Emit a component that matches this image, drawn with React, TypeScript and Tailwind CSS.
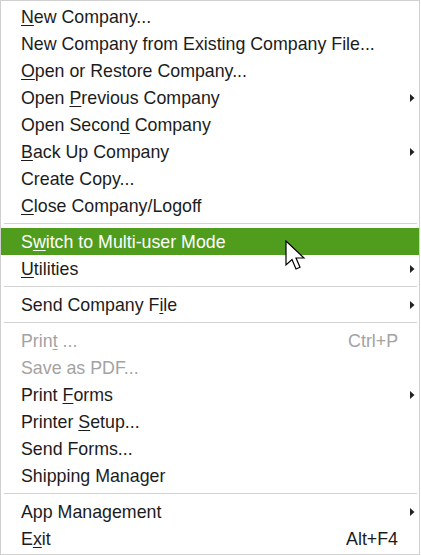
import React from "react";

type Item =
  | { sep: true }
  | {
      sep?: false;
      label: string;
      u?: number; // index of the underlined mnemonic letter
      shortcut?: string;
      sub?: boolean;
      disabled?: boolean;
      active?: boolean;
    };

const items: Item[] = [
  { label: "New Company...", u: 0 },
  { label: "New Company from Existing Company File..." },
  { label: "Open or Restore Company...", u: 0 },
  { label: "Open Previous Company", u: 5, sub: true },
  { label: "Open Second Company", u: 10 },
  { label: "Back Up Company", u: 0, sub: true },
  { label: "Create Copy..." },
  { label: "Close Company/Logoff", u: 0 },
  { sep: true },
  { label: "Switch to Multi-user Mode", u: 1, active: true },
  { label: "Utilities", u: 0, sub: true },
  { sep: true },
  { label: "Send Company File", u: 14, sub: true },
  { sep: true },
  { label: "Print ...", u: 4, shortcut: "Ctrl+P", disabled: true },
  { label: "Save as PDF...", disabled: true },
  { label: "Print Forms", u: 6, sub: true },
  { label: "Printer Setup...", u: 8 },
  { label: "Send Forms..." },
  { label: "Shipping Manager" },
  { sep: true },
  { label: "App Management", sub: true },
  { label: "Exit", u: 1, shortcut: "Alt+F4" },
];

function Label({ text, u }: { text: string; u?: number }) {
  if (u === undefined) return <span>{text}</span>;
  return (
    <span>
      {text.slice(0, u)}
      <span className="underline underline-offset-[2px]">{text[u]}</span>
      {text.slice(u + 1)}
    </span>
  );
}

export default function App() {
  return (
    <div className="w-[421px] h-[555px] bg-white">
      <div
        className="relative w-[420px] h-[555px] border border-[#d0d0d0] bg-white py-[2px] text-[17.8px] text-[#1c1c1c]"
        style={{ fontFamily: '"Liberation Sans", Arial, sans-serif' }}
      >
        {items.map((it, i) =>
          it.sep ? (
            <div key={i} className="h-[9px] flex items-center ml-[3px] mr-[2px]">
              <div className="h-px w-full bg-[#d3d3d3]" />
            </div>
          ) : (
            <div
              key={i}
              className={
                "relative h-[27px] flex items-center pt-[2px] pl-[20px] pr-[21px] " +
                (it.active ? "bg-[#509c1d] text-white " : "") +
                (it.disabled ? "text-[#a3a3a3]" : "")
              }
            >
              <Label text={it.label} u={it.u} />
              {it.shortcut && <span className="ml-auto">{it.shortcut}</span>}
              {it.sub && (
                <svg
                  className="absolute right-[4px] top-[10px]"
                  width="5"
                  height="8"
                  viewBox="0 0 5 8"
                >
                  <path d="M0 0 L4.5 4 L0 8 Z" fill="#222" />
                </svg>
              )}
            </div>
          )
        )}

        {/* mouse pointer over the highlighted row */}
        <svg
          className="absolute left-[284px] top-[239px]"
          width="22"
          height="32"
          viewBox="0 0 22 32"
        >
          <path
            d="M1 1 L1 25 L7 19.5 L11 29 L15 27.3 L11 18 L19 18 Z"
            fill="#fff"
            stroke="#000"
            strokeWidth="1.2"
            strokeLinejoin="miter"
          />
        </svg>
      </div>
    </div>
  );
}
